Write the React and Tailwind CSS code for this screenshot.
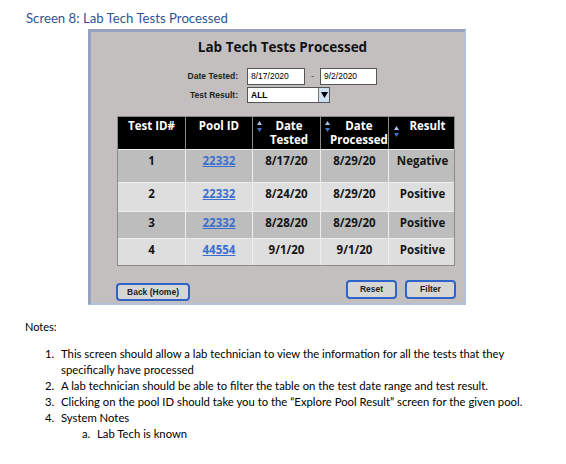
import React from "react";

const rows = [
  { id: "1", pool: "22332", tested: "8/17/20", processed: "8/29/20", result: "Negative", h: "h-[33px]", bg: "bg-[#bdbdbd]" },
  { id: "2", pool: "22332", tested: "8/24/20", processed: "8/29/20", result: "Positive", h: "h-[29px]", bg: "bg-[#dedede]" },
  { id: "3", pool: "22332", tested: "8/28/20", processed: "8/29/20", result: "Positive", h: "h-[27px]", bg: "bg-[#bdbdbd]" },
  { id: "4", pool: "44554", tested: "9/1/20", processed: "9/1/20", result: "Positive", h: "h-[27px]", bg: "bg-[#dedede]" },
];

function SortArrows() {
  return (
    <svg width="5" height="11" viewBox="0 0 5 11" className="shrink-0">
      <path d="M2.5 0 L5 4 L0 4 Z" fill="#a9c3ea" />
      <path d="M2.5 11 L5 7 L0 7 Z" fill="#3e72c8" />
    </svg>
  );
}

function Notes() {
  const items = [
    ["1.", <>This screen should allow a lab technician to view the information for all the tests that they<br />specifically have processed</>],
    ["2.", "A lab technician should be able to filter the table on the test date range and test result."],
    ["3.", "Clicking on the pool ID should take you to the \u201cExplore Pool Result\u201d screen for the given pool."],
    ["4.", "System Notes"],
  ];
  return (
    <div className="mt-[14px] pl-[25px] text-[11.3px] leading-[16px] text-black font-['Lato',sans-serif]">
      <div className="text-[11px]">Notes:</div>
      <div className="mt-[11px] flex flex-col">
        {items.map(([n, t]) => (
          <div key={n} className="flex">
            <span className="w-[36px] shrink-0 pl-[20px]">{n}</span>
            <span className="w-[500px] whitespace-nowrap">{t}</span>
          </div>
        ))}
        <div className="flex">
          <span className="w-[72px] shrink-0 pl-[57px]">a.</span>
          <span>Lab Tech is known</span>
        </div>
      </div>
    </div>
  );
}

export default function App() {
  return (
    <div className="w-[566px] h-[464px] bg-white overflow-hidden">
      <div className="pt-[9px] pl-[26px] text-[13.2px] leading-[18px] text-[#2f5496] font-['Lato',sans-serif]">
        Screen 8: Lab Tech Tests Processed
      </div>

      <div className="ml-[88px] mt-[2px] w-[378px] h-[276px] bg-[#c3bfbf] border-t-[3px] border-l-[3px] border-r-2 border-b-2 border-t-[#96a2c0] border-l-[#96a2c0] border-r-[#b3c0dc] border-b-[#b3c0dc] flex flex-col">
        <div className="pt-[6px] pl-[10px] text-center text-[13.5px] leading-[18px] font-bold text-[#111] font-['Open_Sans',sans-serif]">
          Lab Tech Tests Processed
        </div>

        <div className="mt-[12px] flex flex-col gap-[2px] font-['Liberation_Sans',sans-serif] text-[8.5px]">
          <div className="flex items-center h-[17px]">
            <span className="w-[147px] text-right font-bold text-[#222]">Date Tested:</span>
            <div className="ml-[9px] w-[58px] h-[17px] bg-white border border-[#555] flex items-center pl-[3px] text-black">8/17/2020</div>
            <span className="w-[15px] text-center text-[#333]">-</span>
            <div className="w-[57px] h-[17px] bg-white border border-[#555] flex items-center pl-[3px] text-black">9/2/2020</div>
          </div>
          <div className="flex items-center h-[16px]">
            <span className="w-[147px] text-right font-bold text-[#222]">Test Result:</span>
            <div className="ml-[9px] w-[83px] h-[16px] bg-white border border-[#555] flex items-center text-black">
              <span className="flex-1 pl-[3px] font-bold">ALL</span>
              <div className="w-[11px] h-full bg-[#cfe0f2] border-l border-[#777] flex items-center justify-center">
                <svg width="7" height="6" viewBox="0 0 7 6">
                  <path d="M0 0 L7 0 L3.5 6 Z" fill="#000" />
                </svg>
              </div>
            </div>
          </div>
        </div>

        <div className="mt-[13px] ml-[26px] w-[338px] border border-[#8a8a8a] font-['Open_Sans',sans-serif] font-bold text-[11.5px]">
          <div className="grid grid-cols-[68px_67px_68px_68px_67px] h-[32px] bg-black text-white leading-[14px] divide-x divide-[#8a8a8a]">
            <div className="pt-[2px] text-center">Test ID#</div>
            <div className="pt-[2px] text-center">Pool ID</div>
            <div className="pt-[2px] pl-[4px] flex">
              <div className="pt-[2px]"><SortArrows /></div>
              <div className="flex-1 text-center pr-[4px]">Date<br />Tested</div>
            </div>
            <div className="pt-[2px] pl-[4px] flex">
              <div className="pt-[2px]"><SortArrows /></div>
              <div className="flex-1 text-center pr-[2px]">Date<br />Processed</div>
            </div>
            <div className="pt-[2px] pl-[5px] flex">
              <div className="pt-[7px]"><SortArrows /></div>
              <div className="flex-1 text-center">Result</div>
            </div>
          </div>
          {rows.map((r) => (
            <div key={r.id} className={`grid grid-cols-[68px_67px_68px_68px_67px] ${r.h} ${r.bg} border-t border-[#efefef] divide-x divide-[#efefef] text-[#151515] leading-[16px]`}>
              <div className="pt-[3px] text-center">{r.id}</div>
              <div className="pt-[3px] text-center">
                <span className="text-[#3a6fcf] underline">{r.pool}</span>
              </div>
              <div className="pt-[3px] text-center">{r.tested}</div>
              <div className="pt-[3px] text-center">{r.processed}</div>
              <div className="pt-[3px] text-center">{r.result}</div>
            </div>
          ))}
        </div>

        <div className="mt-[14px] ml-[25px] mr-[8px] flex items-end font-['Liberation_Sans',sans-serif] font-bold text-[8.5px] text-[#222]">
          <button className="w-[74px] h-[18px] rounded-[4px] border-2 border-[#2f63c8] bg-[#d6d6d6]">Back (Home)</button>
          <div className="flex-1" />
          <button className="w-[51px] h-[19px] rounded-[4px] border-2 border-[#2f63c8] bg-[#d6d6d6] mb-[2px]">Reset</button>
          <button className="ml-[8px] w-[51px] h-[19px] rounded-[4px] border-2 border-[#2f63c8] bg-[#d6d6d6] mb-[2px]">Filter</button>
        </div>
      </div>

      <Notes />
    </div>
  );
}
